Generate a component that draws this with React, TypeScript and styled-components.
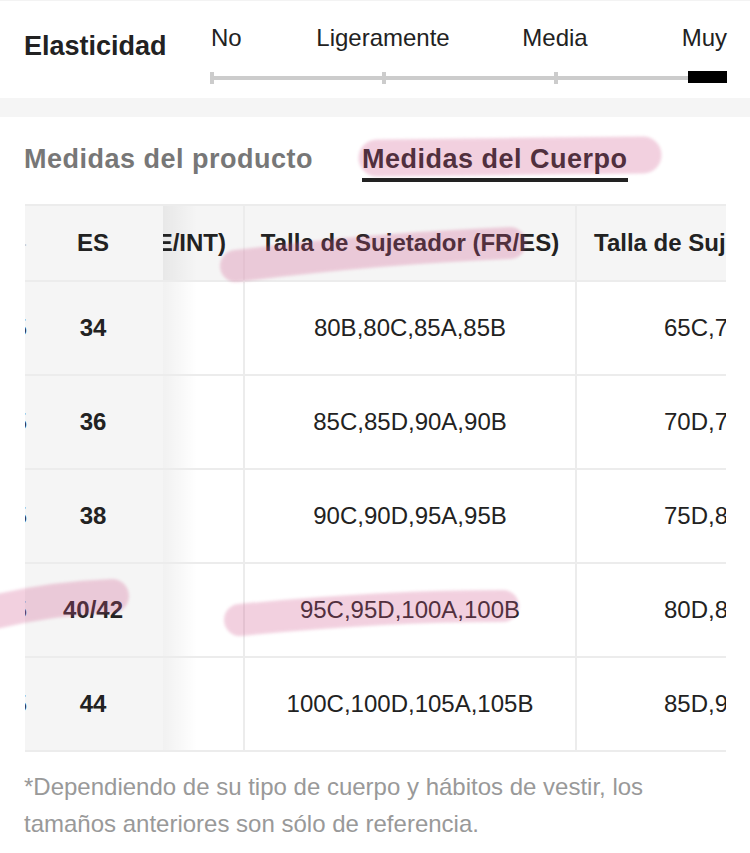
import React from "react";
import styled, { createGlobalStyle, css } from "styled-components";

const Global = createGlobalStyle`
  html, body { margin: 0; padding: 0; background: #fff; }
  body { font-family: "Liberation Sans", Arial, Helvetica, sans-serif; color: #222; }
  * { box-sizing: border-box; }
`;

const Page = styled.div`
  position: relative;
  width: 750px;
  min-height: 853px;
  overflow: hidden;
  background: #fff;
`;

const Top = styled.section`
  display: grid;
  grid-template-columns: 187px 1fr;
  height: 98px;
  padding: 23px 23px 0 24px;
  border-top: 1px solid #f3f3f3;
`;

const Title = styled.h2`
  margin: 7px 0 0;
  font-size: 27px;
  line-height: 30px;
  font-weight: 700;
  color: #222;
`;

const Scale = styled.div`
  display: flex;
  flex-direction: column;
`;

const Labels = styled.div`
  display: grid;
  grid-template-columns: repeat(6, 1fr);
  font-size: 24px;
  line-height: 28px;
  color: #222;
`;

const Label = styled.span<{ $col: string; $align: "start" | "center" | "end" }>`
  grid-column: ${(p) => p.$col};
  justify-self: ${(p) => p.$align};
  white-space: nowrap;
`;

const Track = styled.div`
  position: relative;
  display: grid;
  grid-template-columns: repeat(3, 1fr);
  height: 4px;
  margin-top: 24px;
  background: #cccccc;

  &::after {
    content: "";
    position: absolute;
    right: 0;
    top: -5px;
    width: 39px;
    height: 12px;
    background: #000;
  }
`;

const Segment = styled.span`
  position: relative;

  &::before {
    content: "";
    position: absolute;
    left: -1px;
    top: -4px;
    width: 4px;
    height: 12px;
    background: #cccccc;
  }
`;

const Band = styled.div`
  height: 19px;
  background: #f5f5f5;
`;

const Tabs = styled.nav`
  display: flex;
  gap: 49px;
  padding: 26px 24px 0;
`;

const Tab = styled.span<{ $active?: boolean }>`
  font-size: 27px;
  line-height: 32px;
  letter-spacing: 0.5px;
  font-weight: 700;
  padding-bottom: 3px;
  color: ${(p) => (p.$active ? "#222" : "#777")};
  border-bottom: 4px solid ${(p) => (p.$active ? "#222" : "transparent")};
`;

const Table = styled.div`
  margin: 22px 24px 0 25px;
  border-top: 2px solid #ececec;
  overflow: hidden;
`;

const Row = styled.div<{ $head?: boolean }>`
  display: grid;
  grid-template-columns: 138px 80px 332px 1fr;
  height: ${(p) => (p.$head ? 76 : 94)}px;
  font-size: 24px;
  font-weight: ${(p) => (p.$head ? 700 : 400)};
  color: #222;
  background: ${(p) => (p.$head ? "#f5f5f5" : "#fff")};
`;

const cellBase = css`
  display: flex;
  align-items: center;
  border-bottom: 2px solid #ececec;
  white-space: nowrap;
  overflow: hidden;
`;

const StickyCell = styled.div`
  ${cellBase};
  display: grid;
  grid-template-columns: 2px 1fr 4px;
  background: #f5f5f5;
  font-weight: 700;
  text-align: center;
`;

const Sliver = styled.span<{ $head?: boolean }>`
  display: flex;
  justify-content: flex-end;
  overflow: hidden;
  font-weight: 400;
  color: ${(p) => (p.$head ? "#c8c8c8" : "#333")};
`;

const HiddenCell = styled.div<{ $head?: boolean }>`
  ${cellBase};
  justify-content: flex-end;
  padding-right: 17px;
  background: linear-gradient(to right, rgba(0, 0, 0, 0.055), rgba(0, 0, 0, 0) 34px),
    ${(p) => (p.$head ? "#f5f5f5" : "#fff")};
`;

const MainCell = styled.div`
  ${cellBase};
  justify-content: center;
  border-left: 2px solid #ececec;
`;

const EdgeCell = styled.div<{ $head?: boolean }>`
  ${cellBase};
  justify-content: flex-start;
  border-left: 2px solid #ececec;
  padding-left: ${(p) => (p.$head ? 17 : 87)}px;
`;

const Note = styled.p`
  margin: 0;
  padding: 16px 24px 0;
  font-size: 24px;
  line-height: 37px;
  color: #999;
`;

const Highlights = styled.svg`
  position: absolute;
  left: 0;
  top: 0;
  pointer-events: none;
`;

const rows = [
  { es: "34", bra: "80B,80C,85A,85B", next: "65C,70A,70B,70C" },
  { es: "36", bra: "85C,85D,90A,90B", next: "70D,75A,75B,75C" },
  { es: "38", bra: "90C,90D,95A,95B", next: "75D,80A,80B,80C" },
  { es: "40/42", bra: "95C,95D,100A,100B", next: "80D,85A,85B,85C" },
  { es: "44", bra: "100C,100D,105A,105B", next: "85D,90A,90B,90C" },
];

export default function App() {
  return (
    <Page>
      <Global />
      <Top>
        <Title>Elasticidad</Title>
        <Scale>
          <Labels>
            <Label $col="1 / 2" $align="start">No</Label>
            <Label $col="2 / 4" $align="center">Ligeramente</Label>
            <Label $col="4 / 6" $align="center">Media</Label>
            <Label $col="6 / 7" $align="end">Muy</Label>
          </Labels>
          <Track>
            <Segment />
            <Segment />
            <Segment />
          </Track>
        </Scale>
      </Top>
      <Band />
      <Tabs>
        <Tab>Medidas del producto</Tab>
        <Tab $active>Medidas del Cuerpo</Tab>
      </Tabs>
      <Table>
        <Row $head>
          <StickyCell>
            <Sliver $head>-</Sliver>
            <span>ES</span>
            <span />
          </StickyCell>
          <HiddenCell $head>Talla (UK/EE/INT)</HiddenCell>
          <MainCell>Talla de Sujetador (FR/ES)</MainCell>
          <EdgeCell $head>Talla de Sujetador (UK/US)</EdgeCell>
        </Row>
        {rows.map((r) => (
          <Row key={r.es}>
            <StickyCell>
              <Sliver>5</Sliver>
              <span>{r.es}</span>
              <span />
            </StickyCell>
            <HiddenCell />
            <MainCell>{r.bra}</MainCell>
            <EdgeCell>{r.next}</EdgeCell>
          </Row>
        ))}
      </Table>
      <Note>
        *Dependiendo de su tipo de cuerpo y hábitos de vestir, los tamaños anteriores son sólo de
        referencia.
      </Note>
      <Highlights width="750" height="853" viewBox="0 0 750 853">
        <defs>
          <filter id="soft" x="-10%" y="-50%" width="120%" height="200%">
            <feGaussianBlur stdDeviation="1.8" />
          </filter>
        </defs>
        <g opacity="0.27" filter="url(#soft)" fill="none" stroke="rgb(208,86,140)" strokeLinecap="round">
          <path d="M 377 158 Q 510 157 643 155" strokeWidth="37" />
          <path d="M 236 266 Q 380 248 510 243" strokeWidth="32" />
          <path d="M -14 614 Q 50 598 112 596" strokeWidth="34" />
          <path d="M 240 620 Q 380 606 503 606" strokeWidth="32" />
        </g>
      </Highlights>
    </Page>
  );
}
